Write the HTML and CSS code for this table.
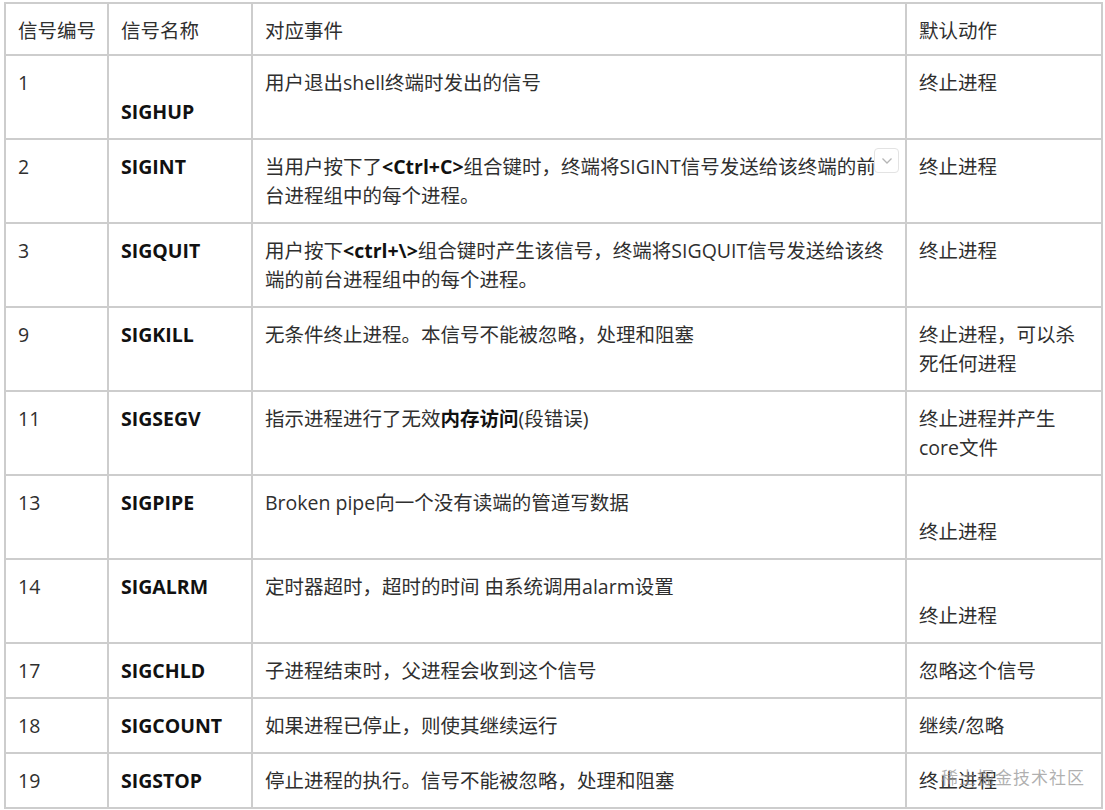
FILE: index.html
```html
<!DOCTYPE html>
<html lang="zh-CN">
<head>
<meta charset="utf-8">
<title>信号</title>
<link rel="stylesheet" href="styles.css">
</head>
<body>
<table class="sig-table">
  <colgroup>
    <col class="c-num">
    <col class="c-name">
    <col class="c-event">
    <col class="c-action">
  </colgroup>
  <thead>
    <tr><th>信号编号</th><th>信号名称</th><th>对应事件</th><th>默认动作</th></tr>
  </thead>
  <tbody>
    <tr><td>1</td><td><br><strong>SIGHUP</strong></td><td>用户退出shell终端时发出的信号</td><td>终止进程</td></tr>
    <tr><td>2</td><td><strong>SIGINT</strong></td><td class="has-tool">当用户按下了<strong>&lt;Ctrl+C&gt;</strong>组合键时，终端将SIGINT信号发送给该终端的前台进程组中的每个进程。<span class="drop-btn"><svg width="12" height="8" viewBox="0 0 12 8"><path d="M1.5 1.5 L6 6 L10.5 1.5" fill="none" stroke="#b5b5b5" stroke-width="1.3"/></svg></span></td><td>终止进程</td></tr>
    <tr><td>3</td><td><strong>SIGQUIT</strong></td><td>用户按下<strong>&lt;ctrl+\&gt;</strong>组合键时产生该信号，终端将SIGQUIT信号发送给该终端的前台进程组中的每个进程。</td><td>终止进程</td></tr>
    <tr><td>9</td><td><strong>SIGKILL</strong></td><td>无条件终止进程。本信号不能被忽略，处理和阻塞</td><td>终止进程，可以杀死任何进程</td></tr>
    <tr><td>11</td><td><strong>SIGSEGV</strong></td><td>指示进程进行了无效<strong>内存访问</strong>(段错误)</td><td>终止进程并产生core文件</td></tr>
    <tr><td>13</td><td><strong>SIGPIPE</strong></td><td>Broken pipe向一个没有读端的管道写数据</td><td><br>终止进程</td></tr>
    <tr><td>14</td><td><strong>SIGALRM</strong></td><td>定时器超时，超时的时间 由系统调用alarm设置</td><td><br>终止进程</td></tr>
    <tr><td>17</td><td><strong>SIGCHLD</strong></td><td>子进程结束时，父进程会收到这个信号</td><td>忽略这个信号</td></tr>
    <tr><td>18</td><td><strong>SIGCOUNT</strong></td><td>如果进程已停止，则使其继续运行</td><td>继续/忽略</td></tr>
    <tr><td>19</td><td><strong>SIGSTOP</strong></td><td>停止进程的执行。信号不能被忽略，处理和阻塞</td><td>终止进程</td></tr>
  </tbody>
</table>
<div class="watermark">稀土掘金技术社区</div>
</body>
</html>
```

FILE: styles.css
```css
html, body {
  margin: 0;
  padding: 0;
  background: #ffffff;
}

body {
  font-family: "Open Sans", "Noto Sans CJK SC", sans-serif;
  font-size: 19.5px;
  line-height: 29px;
  color: #2f2f2f;
  position: relative;
  width: 1105px;
  height: 810px;
  overflow: hidden;
}

.sig-table {
  border-collapse: collapse;
  table-layout: fixed;
  width: 1097px;
  margin: 2px 0 0 4px;
}

.c-num { width: 103px; }
.c-name { width: 144px; }
.c-event { width: 654px; }
.c-action { width: 196px; }

.sig-table th,
.sig-table td {
  border: 2px solid #cdcdcd;
  padding: 12px 12px 12px 12px;
  text-align: left;
  vertical-align: top;
  font-weight: normal;
}

.sig-table th {
  padding-top: 12px;
  padding-bottom: 9px;
  white-space: nowrap;
}

.sig-table strong {
  font-weight: 700;
  color: #111111;
}

.has-tool {
  position: relative;
}

.drop-btn {
  position: absolute;
  top: 8px;
  right: 6px;
  width: 25px;
  height: 25px;
  box-sizing: border-box;
  border: 1px solid #e3e3e3;
  border-radius: 4px;
  background: rgba(255, 255, 255, 0.92);
  display: flex;
  align-items: center;
  justify-content: center;
}

.watermark {
  position: absolute;
  right: 20px;
  top: 765px;
  font-family: "Noto Sans CJK SC", sans-serif;
  font-size: 17px;
  line-height: 24px;
  color: rgba(150, 150, 150, 0.75);
  letter-spacing: 1px;
}
```
